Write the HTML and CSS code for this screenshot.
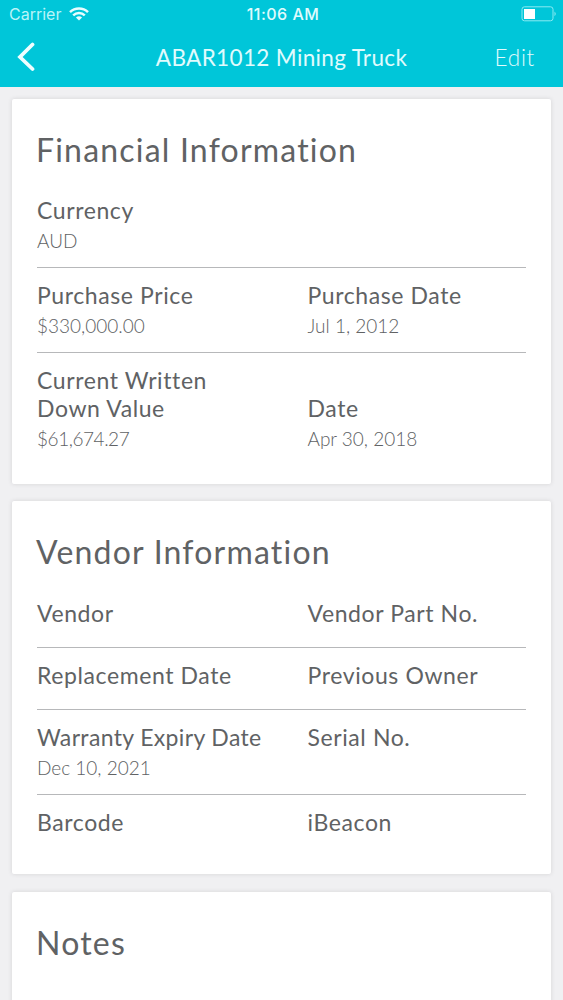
FILE: index.html
```html
<!DOCTYPE html>
<html lang="en">
<head>
<meta charset="utf-8">
<title>ABAR1012 Mining Truck</title>
<link rel="stylesheet" href="styles.css">
</head>
<body>
<header class="header">
  <div class="status">
    <div class="carrier"><span>Carrier</span>
      <svg class="wifi" width="20" height="14" viewBox="0 0 20 14" fill="none" stroke="#e9fdff" stroke-width="2.5">
        <path d="M1 5.1C6 .2 14 .2 19 5.1"/><path d="M4.2 8.3C7.5 5.2 12.500 5.200 15.800 8.300"/><path d="M6.900 10.500Q10 7.900 13.100 10.500L10 13.600Z" fill="#e9fdff" stroke="none"/>
      </svg>
    </div>
    <div class="clock">11:06 AM</div>
    <svg class="battery" width="36" height="16" viewBox="0 0 36 16">
      <rect x="1" y=".8" width="31" height="14" rx="2.500" fill="none" stroke="#8beaf2"/>
      <rect x="3" y="3" width="11" height="10" fill="#fff"/>
      <path d="M33.500 5.500Q36 7.800 33.500 10.200Z" fill="#8beaf2"/>
    </svg>
  </div>
  <nav class="nav">
    <svg class="back" width="20" height="30" viewBox="0 0 20 30" fill="none" stroke="#effeff" stroke-width="3.800" stroke-linecap="round" stroke-linejoin="miter"><path d="M16.500 2.500L4 15L16.500 27"/></svg>
    <h1 class="title">ABAR1012 Mining Truck</h1>
    <span class="edit">Edit</span>
  </nav>
</header>
<main class="cards">
  <section class="card">
    <h2 class="heading">Financial Information</h2>
    <div class="row"><div class="cell"><div class="label">Currency</div><div class="value">AUD</div></div></div>
    <div class="row">
      <div class="cell"><div class="label">Purchase Price</div><div class="value">$330,000.00</div></div>
      <div class="cell"><div class="label">Purchase Date</div><div class="value">Jul 1, 2012</div></div>
    </div>
    <div class="row row-end">
      <div class="cell"><div class="label">Current Written<br>Down Value</div><div class="value value-tight">$61,674.27</div></div>
      <div class="cell"><div class="label">Date</div><div class="value">Apr 30, 2018</div></div>
    </div>
  </section>
  <section class="card">
    <h2 class="heading">Vendor Information</h2>
    <div class="row"><div class="cell"><div class="label">Vendor</div></div><div class="cell"><div class="label">Vendor Part No.</div></div></div>
    <div class="row"><div class="cell"><div class="label">Replacement Date</div></div><div class="cell"><div class="label">Previous Owner</div></div></div>
    <div class="row"><div class="cell"><div class="label label-tight">Warranty Expiry Date</div><div class="value">Dec 10, 2021</div></div><div class="cell"><div class="label">Serial No.</div></div></div>
    <div class="row"><div class="cell"><div class="label">Barcode</div></div><div class="cell"><div class="label">iBeacon</div></div></div>
  </section>
  <section class="card card-notes">
    <h2 class="heading">Notes</h2>
  </section>
</main>
</body>
</html>
```
FILE: styles.css
```css
* { box-sizing: border-box; margin: 0; padding: 0; }
body {
  height: 1000px;
  overflow: hidden;
  background: #f0f0f2;
  color: #606264;
  font-family: Lato, "Open Sans", sans-serif;
}
.header { height: 87px; background: #00c6d9; color: #e0fbfd; }
.status {
  display: grid;
  grid-template-columns: 1fr auto 1fr;
  align-items: center;
  height: 28px;
  padding: 0 6px 0 9px;
  font-family: Inter, Roboto, sans-serif;
}
.carrier { display: flex; align-items: center; gap: 8px; font-size: 16px; color: #b9f4f8; }
.clock { font-size: 16px; font-weight: 500; letter-spacing: 0.5px; }
.battery { justify-self: end; }
.nav {
  display: grid;
  grid-template-columns: 1fr auto 1fr;
  align-items: center;
  height: 58px;
  padding: 0 28px 0 16px;
}
.title { margin-left: 12px; font-size: 22.5px; font-weight: 400; letter-spacing: 0.35px; }
.edit { justify-self: end; font-size: 22.5px; font-weight: 300; letter-spacing: 0.7px; }
.cards { display: flex; flex-direction: column; gap: 17.5px; padding: 11.7px 12px 0 11.5px; }
.card {
  padding: 31px 25px 33.6px 25.5px;
  background: #fff;
  border-radius: 2px;
  box-shadow: 0 0 4px rgba(70, 60, 70, 0.16);
}
.card-notes { height: 140px; }
.heading { margin: 0 0 13.5px -1px; font-size: 32px; font-weight: 400; line-height: 40px; letter-spacing: 1.2px; }
.row {
  display: grid;
  grid-template-columns: 270.5px 1fr;
  padding: 13px 0 15px;
  border-bottom: 1px solid #b7b8ba;
}
.row:last-child { padding-bottom: 0; border-bottom: 0; }
.row-end { align-items: end; }
.cell { min-height: 33px; }
.label { font-size: 23px; line-height: 28px; letter-spacing: 0.6px; }
.label-tight { letter-spacing: 0.35px; }
.value { padding-top: 5px; font-size: 19px; font-weight: 300; line-height: 23px; }
.value-tight { letter-spacing: -0.45px; }
```
